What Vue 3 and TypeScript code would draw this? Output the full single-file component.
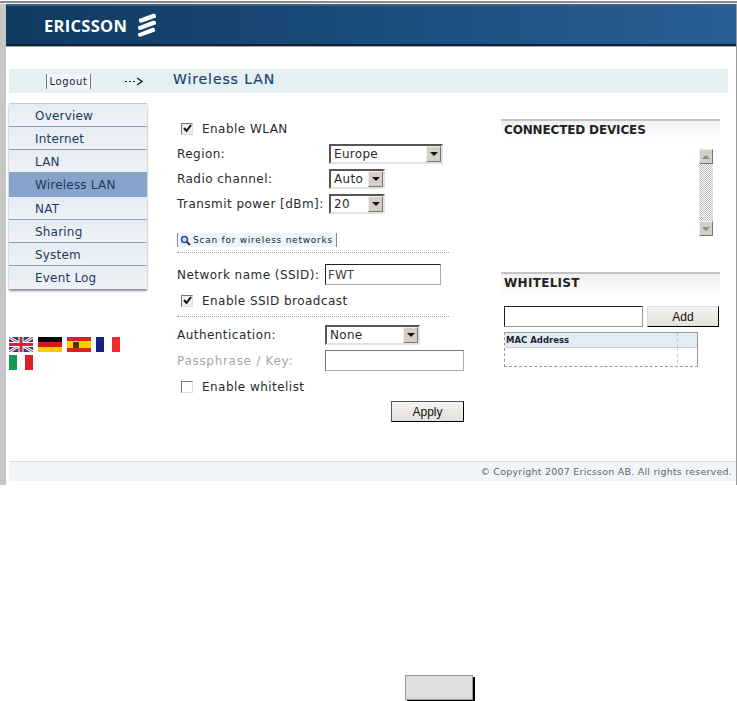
<script setup lang="ts">
const menu = ['Overview', 'Internet', 'LAN', 'Wireless LAN', 'NAT', 'Sharing', 'System', 'Event Log']
const active = 'Wireless LAN'
</script>

<template>
  <div class="page">
    <div class="topline"></div>
    <div class="window">
      <header class="header">
        <span class="brand">ERICSSON</span>
        <svg class="mark" width="20" height="24" viewBox="0 0 20 24">
          <path d="M2 6 L16 0.8 Q19 0 19 3 L19 4.4 L5 9.6 Q2 10.4 2 7.4 Z" fill="#fff" />
          <path d="M1 13.4 L16 7.8 Q19 7 19 10 L19 11.2 L4 16.8 Q1 17.6 1 14.6 Z" fill="#fff" />
          <path d="M1 20.4 L15 15 Q18 14.2 18 17.2 L18 18.4 L4 23.6 Q1 24.4 1 21.4 Z" fill="#fff" />
        </svg>
      </header>

      <div class="titlebar">
        <a class="logout">Logout</a>
        <svg class="arrow" width="18" height="9" viewBox="0 0 18 9">
          <path d="M0 4.5 H12" stroke="#223" stroke-dasharray="2 2" fill="none" />
          <path d="M12 1 L17 4.5 L12 8" stroke="#223" stroke-width="1.4" fill="none" />
        </svg>
        <h1 class="title">Wireless LAN</h1>
      </div>

      <div class="columns">
        <aside class="left">
          <nav class="menu">
            <div v-for="item in menu" :key="item" class="menu-item" :class="{ on: item === active }">{{ item }}</div>
          </nav>
          <div class="flags">
            <svg width="24" height="15" viewBox="0 0 24 15">
              <rect width="24" height="15" fill="#2b3f86" />
              <path d="M0 0 L24 15 M24 0 L0 15" stroke="#fff" stroke-width="3" />
              <path d="M0 0 L24 15 M24 0 L0 15" stroke="#c8283c" stroke-width="1" />
              <path d="M12 0 V15 M0 7.5 H24" stroke="#fff" stroke-width="5" />
              <path d="M12 0 V15 M0 7.5 H24" stroke="#c8283c" stroke-width="3" />
            </svg>
            <svg width="24" height="15" viewBox="0 0 24 15">
              <rect width="24" height="5" fill="#000" />
              <rect y="5" width="24" height="5" fill="#d8141c" />
              <rect y="10" width="24" height="5" fill="#fc0" />
            </svg>
            <svg width="24" height="15" viewBox="0 0 24 15">
              <rect width="24" height="15" fill="#d8201c" />
              <rect y="4" width="24" height="7" fill="#fc0" />
              <rect x="6" y="5" width="6" height="6" rx="1" fill="#5a2a10" />
            </svg>
            <svg width="24" height="15" viewBox="0 0 24 15">
              <rect width="8" height="15" fill="#14218c" />
              <rect x="8" width="8" height="15" fill="#fff" />
              <rect x="16" width="8" height="15" fill="#ee2a30" />
            </svg>
            <svg width="24" height="15" viewBox="0 0 24 15">
              <rect width="8" height="15" fill="#149a50" />
              <rect x="8" width="8" height="15" fill="#fff" />
              <rect x="16" width="8" height="15" fill="#d8202c" />
            </svg>
          </div>
        </aside>

        <main class="form">
          <div class="row check-row">
            <span class="check"><svg width="9" height="9" viewBox="0 0 9 9"><path d="M1 4 L3.5 7 L8 1" stroke="#111" stroke-width="2" fill="none" /></svg></span>
            <span>Enable WLAN</span>
          </div>
          <div class="row">
            <label class="label wide">Region:</label>
            <div class="select region">Europe<span class="drop"><i></i></span></div>
          </div>
          <div class="row">
            <label class="label wide">Radio channel:</label>
            <div class="select short">Auto<span class="drop"><i></i></span></div>
          </div>
          <div class="row">
            <label class="label wide">Transmit power [dBm]:</label>
            <div class="select short">20<span class="drop"><i></i></span></div>
          </div>

          <button class="scan" type="button">
            <svg width="11" height="11" viewBox="0 0 11 11">
              <circle cx="4.5" cy="4.5" r="3" fill="#cfe0f5" stroke="#1f4fa8" stroke-width="1.6" />
              <path d="M7 7 L10 10" stroke="#333" stroke-width="2" />
            </svg>
            Scan for wireless networks
          </button>
          <div class="divider first"></div>

          <div class="row network">
            <label class="label">Network name (SSID):</label>
            <input class="text ssid" value="FWT" />
          </div>
          <div class="row check-row tight">
            <span class="check"><svg width="9" height="9" viewBox="0 0 9 9"><path d="M1 4 L3.5 7 L8 1" stroke="#111" stroke-width="2" fill="none" /></svg></span>
            <span>Enable SSID broadcast</span>
          </div>
          <div class="divider second"></div>

          <div class="row auth">
            <label class="label">Authentication:</label>
            <div class="select authsel">None<span class="drop"><i></i></span></div>
          </div>
          <div class="row tight">
            <label class="label muted">Passphrase / Key:</label>
            <input class="text pass" />
          </div>
          <div class="row check-row tight">
            <span class="check off"></span>
            <span>Enable whitelist</span>
          </div>
          <div class="actions">
            <button class="btn apply" type="button">Apply</button>
          </div>
        </main>

        <aside class="side">
          <h2 class="side-head">CONNECTED DEVICES</h2>
          <div class="scrollbar">
            <span class="sb-btn"><i class="up"></i></span>
            <span class="sb-track"></span>
            <span class="sb-btn"><i></i></span>
          </div>

          <h2 class="side-head white">WHITELIST</h2>
          <div class="add-row">
            <input class="text mac" />
            <button class="btn add" type="button">Add</button>
          </div>
          <div class="table">
            <div class="thead"><span>MAC Address</span></div>
            <div class="tbody"></div>
          </div>
        </aside>
      </div>

      <footer class="footer">© Copyright 2007 Ericsson AB. All rights reserved.</footer>
    </div>

    <button class="ghost" type="button"></button>
  </div>
</template>

<style scoped>
.page {
  width: 737px;
  height: 701px;
  overflow: hidden;
  background: #fff;
  font-family: "DejaVu Sans", Verdana, sans-serif;
  font-size: 12px;
  color: #2a2a2a;
}

.topline {
  height: 4px;
  box-sizing: border-box;
  border-top: 1px solid #fff;
  border-bottom: 1px solid #eee;
  background: #8c8c8c;
}

.window {
  height: 481px;
  box-sizing: border-box;
  border-left: 6px solid #c6c6c6;
  border-right: 1px solid #9a9a9a;
}

.header {
  height: 42px;
  box-sizing: border-box;
  display: flex;
  align-items: center;
  padding-left: 38px;
  background: linear-gradient(90deg, #0f3a60 0%, #1b4c7c 50%, #2a5f96 100%);
  border-top: 2px solid #3f6183;
  border-bottom: 2px solid #0b2238;
  box-shadow: 0 1px 0 #aaa;
}

.brand {
  font-family: "Open Sans", sans-serif;
  font-weight: 700;
  font-size: 16.5px;
  letter-spacing: 0.3px;
  color: #fff;
}

.mark {
  margin-left: 10px;
}

.titlebar {
  height: 24px;
  margin: 23px 8px 0 3px;
  display: flex;
  align-items: center;
  background: #e6eff1;
}

.logout {
  width: 43px;
  height: 15px;
  line-height: 15px;
  margin-left: 37px;
  text-align: center;
  font-size: 10px;
  letter-spacing: 0.6px;
  color: #223;
  background: #f0f5f7;
  border-left: 1px solid #777;
  border-right: 1px solid #777;
}

.arrow {
  margin-left: 34px;
}

.title {
  margin: 0 0 4px 30px;
  font-size: 14px;
  font-weight: 400;
  letter-spacing: 0.9px;
  -webkit-text-stroke: 0.2px #1a4570;
  color: #1a4570;
}

.columns {
  height: 368px;
  display: flex;
}

.left {
  width: 138px;
  margin-left: 3px;
  padding-top: 10px;
}

.menu {
  box-shadow: 0 2px 2px #8a8f96;
  border-top: 1px solid #c8c8c8;
}

.menu-item {
  height: 23.15px;
  line-height: 24px;
  box-sizing: border-box;
  padding-left: 26px;
  background: linear-gradient(#e6ecf3, #eef2f7);
  border-bottom: 1px solid #8ca0b8;
  color: #1c3a5c;
  letter-spacing: 0.2px;
}

.menu-item:last-child {
  border-bottom: none;
}

.menu-item.on {
  background: #86a4cb;
  border-bottom-color: #86a4cb;
}

.flags {
  width: 118px;
  margin-top: 48px;
  display: flex;
  flex-wrap: wrap;
  gap: 3px 5px;
}

.flags svg {
  display: block;
}

.form {
  width: 287px;
  margin-left: 30px;
  padding-top: 23px;
}

.row {
  height: 25px;
  display: flex;
  align-items: center;
  letter-spacing: 0.46px;
}

.tight {
  margin-top: 1px;
}

.label {
  width: 148px;
  flex: none;
  white-space: nowrap;
}

.label.wide {
  width: 152px;
}

.muted {
  color: #a8a8a8;
  letter-spacing: 0.7px;
}

.check-row {
  padding-left: 4px;
  gap: 9px;
}

.check {
  width: 12px;
  height: 12px;
  box-sizing: border-box;
  display: flex;
  align-items: center;
  justify-content: center;
  background: #eee;
  border: 1px solid;
  border-color: #777 #ddd #ddd #777;
}

.check.off {
  background: #fff;
}

.select {
  height: 20px;
  box-sizing: border-box;
  display: flex;
  align-items: center;
  justify-content: space-between;
  padding-left: 3px;
  border: 2px solid;
  border-color: #555 #e4e2dc #e4e2dc #555;
  letter-spacing: 0.3px;
  background: #fff;
}

.region {
  width: 114px;
}

.short {
  width: 56px;
}

.authsel {
  width: 95px;
}

.drop {
  width: 15px;
  height: 16px;
  box-sizing: border-box;
  display: flex;
  align-items: center;
  justify-content: center;
  background: #d4d0c8;
  border: 1px solid;
  border-color: #f2f0ea #777 #777 #f2f0ea;
}

.drop i {
  border: 4px solid transparent;
  border-top-color: #111;
  border-bottom: none;
}

.text {
  box-sizing: border-box;
  height: 21px;
  padding: 0 2px;
  font: inherit;
  color: #444;
  background: #fff;
  border: 1px solid;
  border-color: #222 #aaa #aaa #222;
  outline: none;
}

.ssid {
  width: 116px;
}

.pass {
  width: 139px;
  border-color: #777 #aaa #aaa #777;
}

.scan {
  display: flex;
  align-items: center;
  gap: 2px;
  width: 160px;
  height: 14px;
  margin-top: 17px;
  padding: 0 0 0 2px;
  font-family: inherit;
  font-size: 9px;
  letter-spacing: 0.75px;
  color: #223;
  background: #eff4f8;
  border: none;
  border-left: 1px solid #888;
  border-right: 1px solid #888;
}

.divider {
  width: 272px;
  border-top: 1px dotted #999;
}

.divider.first {
  margin-top: 5px;
}

.divider.second {
  margin-top: 3px;
}

.network {
  margin-top: 9px;
}

.auth {
  margin-top: 5px;
}

.actions {
  margin-top: 2px;
  display: flex;
  justify-content: flex-end;
}

.btn {
  height: 21px;
  padding: 0;
  font-family: "Liberation Sans", Arial, sans-serif;
  font-size: 12px;
  color: #111;
  background: linear-gradient(#f4f4f2, #e2e0dc);
  border: 1px solid;
  border-color: #ddd #000 #000 #ddd;
}

.apply {
  width: 73px;
  border-color: #555 #000 #000 #555;
}

.side {
  width: 219px;
  margin-left: 37px;
  padding-top: 26px;
}

.side-head {
  margin: 0;
  height: 19px;
  box-sizing: border-box;
  padding: 2px 0 0 3px;
  font-size: 12px;
  line-height: 15px;
  font-weight: 700;
  letter-spacing: -0.15px;
  color: #222;
  background: linear-gradient(#f0f0f0, #fff);
  border-top: 2px solid #c4c4c4;
}

.side-head.white {
  height: 24px;
  margin-top: 36px;
  padding-top: 2px;
  letter-spacing: 0.3px;
}

.scrollbar {
  width: 14px;
  height: 87px;
  margin: 11px 0 0 198px;
  display: flex;
  flex-direction: column;
}

.sb-btn {
  height: 15px;
  flex: none;
  box-sizing: border-box;
  display: flex;
  align-items: center;
  justify-content: center;
  background: #d4d0c8;
  border: 1px solid;
  border-color: #eee #777 #777 #eee;
}

.sb-btn i {
  border: 4px solid transparent;
  border-top-color: #888;
  border-bottom: none;
}

.sb-btn i.up {
  border-top: none;
  border-bottom: 4px solid #888;
}

.sb-track {
  flex: 1;
  background: repeating-conic-gradient(#bbb 0 25%, #fff 0 50%) 0 0 / 2px 2px;
}

.add-row {
  margin: 10px 1px 0 3px;
  display: flex;
  gap: 4px;
}

.mac {
  width: 139px;
  border-color: #222 #999 #999 #222;
}

.add {
  width: 72px;
}

.table {
  width: 194px;
  height: 35px;
  margin: 5px 0 0 3px;
  box-sizing: border-box;
  border-top: 1px solid #999;
  border-right: 1px solid #999;
  border-left: 1px dashed #999;
  border-bottom: 1px dashed #999;
}

.thead,
.tbody {
  background-image: repeating-linear-gradient(#c4c4c4 0 3px, transparent 3px 6px);
  background-size: 1px 100%;
  background-position: 172px 0;
  background-repeat: no-repeat;
}

.thead {
  height: 15px;
  box-sizing: border-box;
  padding-left: 1px;
  font-size: 8.5px;
  font-weight: 700;
  line-height: 15px;
  color: #223;
  background-color: #e4ecf3;
  border-bottom: 1px solid #ccd;
}

.tbody {
  height: 19px;
}

.footer {
  height: 20px;
  margin: 0 0 0 3px;
  box-sizing: border-box;
  padding-right: 4px;
  line-height: 19px;
  text-align: right;
  font-size: 9.5px;
  letter-spacing: 0.22px;
  color: #666;
  background: #f1f5f8;
  border-top: 1px solid #ddd;
}

.ghost {
  display: block;
  width: 68px;
  height: 25px;
  margin: 190px 0 0 405px;
  padding: 0;
  background: #dedede;
  border: 1px solid #999;
  box-shadow: 2px 2px 0 #000;
}
</style>
